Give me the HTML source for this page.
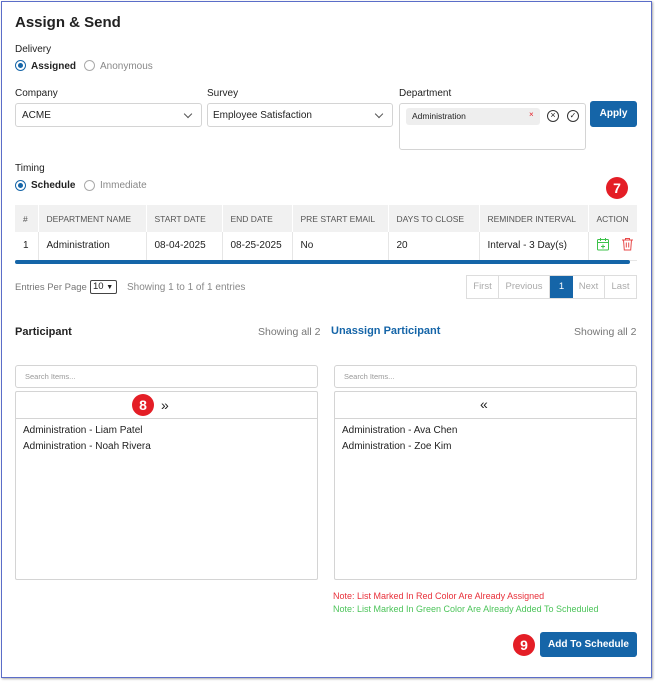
<!DOCTYPE html>
<html><head><meta charset="utf-8"><style>
*{box-sizing:border-box;margin:0;padding:0}
body{width:655px;height:682px;background:#fff;font-family:"Liberation Sans",sans-serif;color:#222;position:relative;overflow:hidden;font-size:10px}
.a{position:absolute;white-space:nowrap}
.frame{position:absolute;left:1px;top:1px;width:651px;height:677px;border:1px solid #5b6dc8;box-shadow:1px 1px 2px #aaa}
.lbl{font-size:10px;color:#222}
.box{position:absolute;border:1px solid #d4d4d4;border-radius:3px;background:#fff}
.radio{position:absolute;width:11px;height:11px;border-radius:50%;border:1px solid #aaa}
.radio.on{border-color:#1565a8}
.radio.on:after{content:"";position:absolute;left:2px;top:2px;width:5px;height:5px;border-radius:50%;background:#1565a8}
.badge{position:absolute;width:22px;height:22px;border-radius:50%;background:#e41e26;color:#fff;font-weight:bold;font-size:14px;text-align:center;line-height:22px}
.btn{position:absolute;background:#1565a8;color:#fff;font-weight:bold;border-radius:3px;text-align:center;font-size:10px}
table{position:absolute;left:15px;top:205px;width:622px;border-collapse:collapse;font-size:9.5px}
th{background:#f1f1f1;color:#555;font-weight:normal;text-align:left;height:27px;padding-left:8px;border-right:1px solid #fff;font-size:8.5px}
td{height:28px;padding-left:8px;border-right:1px solid #e6e6e6;border-bottom:1px solid #e6e6e6;font-size:10px}
.chev{position:absolute;width:6px;height:6px;border-right:1px solid #555;border-bottom:1px solid #555;transform:rotate(45deg)}
</style></head><body>
<div class="frame"></div>
<div class="a" style="left:15px;top:14px;font-size:15px;font-weight:bold">Assign &amp; Send</div>
<div class="a lbl" style="left:15px;top:44px">Delivery</div>
<div class="radio on" style="left:15px;top:60px"></div>
<div class="a" style="left:31px;top:61px;font-weight:bold;font-size:10px">Assigned</div>
<div class="radio" style="left:84px;top:60px"></div>
<div class="a" style="left:100px;top:61px;color:#888">Anonymous</div>

<div class="a lbl" style="left:15px;top:88px">Company</div>
<div class="a lbl" style="left:207px;top:88px">Survey</div>
<div class="a lbl" style="left:399px;top:88px">Department</div>
<div class="box" style="left:15px;top:103px;width:187px;height:24px"></div>
<div class="a" style="left:22px;top:110px">ACME</div>
<div class="chev" style="left:185px;top:111px"></div>
<div class="box" style="left:207px;top:103px;width:186px;height:24px"></div>
<div class="a" style="left:213px;top:110px">Employee Satisfaction</div>
<div class="chev" style="left:376px;top:111px"></div>
<div class="box" style="left:399px;top:103px;width:187px;height:47px"></div>
<div class="a" style="left:406px;top:108px;width:134px;height:17px;background:#eee;border-radius:3px"></div>
<div class="a" style="left:412px;top:111px;font-size:8.5px">Administration</div>
<div class="a" style="left:529px;top:110px;color:#e41e26;font-size:8px">×</div>
<div class="a" style="left:547px;top:110px;width:12px;height:12px;border:1.2px solid #333;border-radius:50%;font-size:9px;line-height:9px;text-align:center">×</div>
<div class="a" style="left:567px;top:110px;width:12px;height:12px;border:1.2px solid #333;border-radius:50%;font-size:8px;line-height:9px;text-align:center">✓</div>
<div class="btn" style="left:590px;top:101px;width:47px;height:26px;line-height:26px">Apply</div>

<div class="a lbl" style="left:15px;top:163px">Timing</div>
<div class="radio on" style="left:15px;top:180px"></div>
<div class="a" style="left:31px;top:180px;font-weight:bold">Schedule</div>
<div class="radio" style="left:84px;top:180px"></div>
<div class="a" style="left:100px;top:180px;color:#888">Immediate</div>
<div class="badge" style="left:606px;top:177px">7</div>

<table>
<tr><th style="width:23px">#</th><th style="width:108px">DEPARTMENT NAME</th><th style="width:76px">START DATE</th><th style="width:70px">END DATE</th><th style="width:96px">PRE START EMAIL</th><th style="width:91px">DAYS TO CLOSE</th><th style="width:109px">REMINDER INTERVAL</th><th style="border-right:0">ACTION</th></tr>
<tr><td>1</td><td>Administration</td><td>08-04-2025</td><td>08-25-2025</td><td>No</td><td>20</td><td>Interval - 3 Day(s)</td><td style="border-right:0"></td></tr>
</table>
<svg class="a" style="left:596px;top:237px" width="14" height="14" viewBox="0 0 14 14" fill="none" stroke="#3cc24a" stroke-width="1"><rect x="1.5" y="2.5" width="11" height="10.5" rx="1"/><path d="M1.5 5.5h11M4.5 1v3M9.5 1v3M7 7.5v4M5 9.5h4"/></svg>
<svg class="a" style="left:621px;top:237px" width="13" height="14" viewBox="0 0 13 14" fill="none" stroke="#e84a4a" stroke-width="1"><path d="M1 3h11M4.5 3V1.5h4V3M2.5 3l.8 10h6.4l.8-10M5.3 5.5v5M7.7 5.5v5"/></svg>
<div class="a" style="left:15px;top:260px;width:615px;height:4px;background:#1565a8;border-radius:2px"></div>

<div class="a" style="left:15px;top:282px;color:#777;font-size:9.5px">Entries Per Page</div>
<div class="a" style="left:90px;top:280px;width:27px;height:14px;border:1px solid #444;border-radius:2px;font-size:9.5px;padding-left:2px;line-height:12px">10 <span style="font-size:7px">▼</span></div>
<div class="a" style="left:127px;top:282px;color:#888">Showing 1 to 1 of 1 entries</div>
<div class="a" style="left:466px;top:275px;width:171px;height:24px;border:1px solid #ddd;display:flex;font-size:9.5px;color:#aaa">
<div style="width:32px;border-right:1px solid #ddd;text-align:center;line-height:22px">First</div>
<div style="width:51px;border-right:1px solid #ddd;text-align:center;line-height:22px">Previous</div>
<div style="width:23px;background:#1565a8;color:#fff;text-align:center;line-height:22px">1</div>
<div style="width:32px;border-right:1px solid #ddd;text-align:center;line-height:22px">Next</div>
<div style="flex:1;text-align:center;line-height:22px">Last</div></div>

<div class="a" style="left:15px;top:326px;font-weight:bold;font-size:11px">Participant</div>
<div class="a" style="left:258px;top:326px;color:#777;font-size:10.5px">Showing all 2</div>
<div class="a" style="left:331px;top:325px;color:#1565a8;font-weight:bold;font-size:11px">Unassign Participant</div>
<div class="a" style="left:574px;top:326px;color:#777;font-size:10.5px">Showing all 2</div>

<div class="box" style="left:15px;top:365px;width:303px;height:23px"></div>
<div class="a" style="left:25px;top:372px;color:#999;font-size:7.5px">Search Items...</div>
<div class="box" style="left:334px;top:365px;width:303px;height:23px"></div>
<div class="a" style="left:344px;top:372px;color:#999;font-size:7.5px">Search Items...</div>

<div class="box" style="left:15px;top:391px;width:303px;height:189px;border-radius:2px"></div>
<div class="a" style="left:15px;top:418px;width:303px;height:1px;background:#d4d4d4"></div>
<div class="a" style="left:161px;top:397px;font-size:14px">»</div>
<div class="badge" style="left:132px;top:394px">8</div>
<div class="a" style="left:23px;top:425px">Administration - Liam Patel</div>
<div class="a" style="left:23px;top:441px">Administration - Noah Rivera</div>

<div class="box" style="left:334px;top:391px;width:303px;height:189px;border-radius:2px"></div>
<div class="a" style="left:334px;top:418px;width:303px;height:1px;background:#d4d4d4"></div>
<div class="a" style="left:480px;top:396px;font-size:14px">«</div>
<div class="a" style="left:342px;top:425px">Administration - Ava Chen</div>
<div class="a" style="left:342px;top:441px">Administration - Zoe Kim</div>

<div class="a" style="left:333px;top:591px;color:#e8303a;font-size:9px">Note: List Marked In Red Color Are Already Assigned</div>
<div class="a" style="left:333px;top:604px;color:#4cc45a;font-size:9px">Note: List Marked In Green Color Are Already Added To Scheduled</div>
<div class="btn" style="left:540px;top:632px;width:97px;height:25px;line-height:25px">Add To Schedule</div>
<div class="badge" style="left:513px;top:634px">9</div>
</body></html>
